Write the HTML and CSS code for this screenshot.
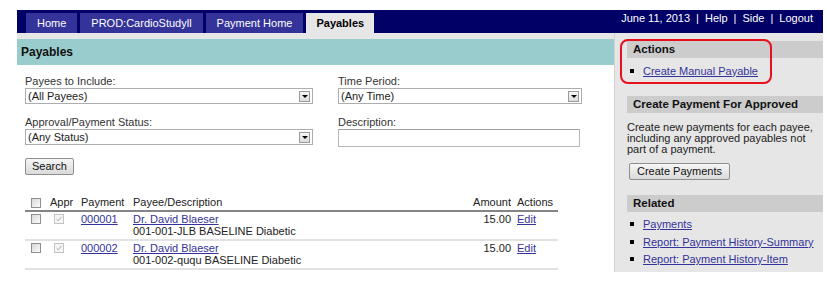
FILE: index.html
```html
<!DOCTYPE html>
<html>
<head>
<meta charset="utf-8">
<title>Payables</title>
<link rel="stylesheet" href="styles.css">
</head>
<body>
<div class="page">
  <header class="topbar">
    <nav class="tabs">
      <a class="tab" href="#">Home</a>
      <a class="tab" href="#">PROD:CardioStudyll</a>
      <a class="tab" href="#">Payment Home</a>
      <a class="tab active" href="#">Payables</a>
    </nav>
    <div class="util">June 11, 2013<span class="sep">|</span><a href="#">Help</a><span class="sep">|</span><a href="#">Side</a><span class="sep">|</span><a href="#">Logout</a></div>
  </header>
  <div class="layout">
    <main class="main">
      <h1 class="title">Payables</h1>
      <div class="content">
        <div class="filters">
          <div class="field">
            <label>Payees to Include:</label>
            <div class="select wide"><span class="value">(All Payees)</span><span class="arrow"></span></div>
          </div>
          <div class="field">
            <label>Time Period:</label>
            <div class="select narrow"><span class="value">(Any Time)</span><span class="arrow"></span></div>
          </div>
          <div class="field">
            <label>Approval/Payment Status:</label>
            <div class="select wide"><span class="value">(Any Status)</span><span class="arrow"></span></div>
          </div>
          <div class="field">
            <label>Description:</label>
            <div class="text-input"></div>
          </div>
        </div>
        <button class="btn search">Search</button>
        <table class="grid">
          <colgroup>
            <col class="c-sel"><col class="c-appr"><col class="c-pay"><col class="c-payee"><col class="c-amt"><col class="c-act">
          </colgroup>
          <thead>
            <tr>
              <th class="center"><span class="cb"></span></th>
              <th>Appr</th>
              <th>Payment</th>
              <th>Payee/Description</th>
              <th class="right">Amount</th>
              <th>Actions</th>
            </tr>
          </thead>
          <tbody>
            <tr>
              <td class="center"><span class="cb"></span></td>
              <td><span class="cb checked"><svg viewBox="0 0 8 8" width="8" height="8"><path d="M1.5 4.2 L3.2 5.8 L6.6 1.8" fill="none" stroke="#a8a8a8" stroke-width="1"/></svg></span></td>
              <td><a href="#">000001</a></td>
              <td><a href="#">Dr. David Blaeser</a><br>001-001-JLB BASELINE Diabetic</td>
              <td class="right">15.00</td>
              <td><a href="#">Edit</a></td>
            </tr>
            <tr>
              <td class="center"><span class="cb"></span></td>
              <td><span class="cb checked"><svg viewBox="0 0 8 8" width="8" height="8"><path d="M1.5 4.2 L3.2 5.8 L6.6 1.8" fill="none" stroke="#a8a8a8" stroke-width="1"/></svg></span></td>
              <td><a href="#">000002</a></td>
              <td><a href="#">Dr. David Blaeser</a><br>001-002-ququ BASELINE Diabetic</td>
              <td class="right">15.00</td>
              <td><a href="#">Edit</a></td>
            </tr>
          </tbody>
        </table>
      </div>
    </main>
    <aside class="side">
      <section class="sbox">
        <h2>Actions</h2>
        <ul class="links">
          <li><a href="#">Create Manual Payable</a></li>
        </ul>
        <div class="highlight"></div>
      </section>
      <section class="sbox gap1">
        <h2>Create Payment For Approved</h2>
        <p class="desc">Create new payments for each payee, including any approved payables not part of a payment.</p>
        <button class="btn create">Create Payments</button>
      </section>
      <section class="sbox gap2">
        <h2>Related</h2>
        <ul class="links rel">
          <li><a href="#">Payments</a></li>
          <li><a href="#">Report: Payment History-Summary</a></li>
          <li><a href="#">Report: Payment History-Item</a></li>
        </ul>
      </section>
    </aside>
  </div>
</div>
</body>
</html>
```

FILE: styles.css
```css
* { box-sizing: border-box; }

body {
  margin: 0;
  background: #fff;
  font-family: "Liberation Sans", Arial, sans-serif;
  font-size: 11px;
  color: #222;
}

a { color: #333399; }

.page {
  width: 806px;
  margin: 10px 0 0 17px;
}

/* top bar */
.topbar {
  display: flex;
  justify-content: space-between;
  height: 23px;
  background: #000066;
  padding: 0 10px 0 9px;
}
.tabs {
  display: flex;
  gap: 3px;
  align-self: flex-end;
}
.tab {
  display: block;
  height: 20px;
  line-height: 20px;
  padding: 0 11px;
  background: #333399;
  color: #fff;
  text-decoration: none;
}
.tab.active {
  background: #e6e6e6;
  color: #000;
  font-weight: bold;
  padding: 0 10px;
}
.util {
  color: #fff;
  padding-top: 2px;
  line-height: 13px;
}
.util a { color: #fff; text-decoration: none; }
.sep { margin: 0 6px; }

/* layout */
.layout {
  display: flex;
  background: #e6e6e6;
}
.main {
  width: 597px;
  margin-top: 6px;
  background: #fff;
  padding-bottom: 2px;
}
.title {
  margin: 0;
  height: 26px;
  line-height: 26px;
  padding-left: 4px;
  background: #99cccc;
  font-size: 12px;
  font-weight: bold;
  color: #111;
}
.content { padding: 10px 0 0 8px; }

/* filters */
.filters {
  display: grid;
  grid-template-columns: 288px 244px;
  column-gap: 25px;
  row-gap: 12px;
}
.field label {
  display: block;
  line-height: 13px;
  color: #333;
}
.select {
  display: flex;
  align-items: center;
  height: 16px;
  border: 1px solid #abadb3;
  background: #fff;
  padding: 0 2px 0 2px;
}
.select .value { flex: 1; line-height: 14px; color: #222; }
.select .arrow {
  width: 11px;
  height: 11px;
  border: 1px solid #9a9a9a;
  background: linear-gradient(#f7f7f7, #dcdcdc);
  display: flex;
  align-items: center;
  justify-content: center;
}
.select .arrow::before {
  content: "";
  border-left: 3px solid transparent;
  border-right: 3px solid transparent;
  border-top: 3px solid #000;
}
.text-input {
  width: 242px;
  height: 18px;
  border: 1px solid #b8b8b8;
  border-top-color: #a0a0a0;
  background: #fff;
}

.btn {
  font-family: inherit;
  font-size: 11px;
  height: 17px;
  line-height: 15px;
  padding: 0 6px;
  border: 1px solid #8e8e8e;
  border-radius: 2px;
  background: linear-gradient(#f6f6f6, #dadada);
  color: #111;
}
.search { display: block; margin-top: 11px; }

/* table */
.grid {
  margin-top: 20px;
  width: 533px;
  border-collapse: collapse;
  table-layout: fixed;
}
.c-sel { width: 22px; }
.c-appr { width: 31px; }
.c-pay { width: 52px; }
.c-payee { width: 339px; }
.c-amt { width: 45px; }
.c-act { width: 44px; }
.grid th {
  font-weight: normal;
  text-align: left;
  line-height: 13px;
  padding: 1px 3px;
  border-bottom: 2px solid #858585;
  color: #222;
}
.grid td {
  vertical-align: top;
  line-height: 12px;
  padding: 1px 3px 2px;
  border-bottom: 2px solid #e2e2e2;
}
.grid .center { text-align: center; }
.grid .right { text-align: right; }
.cb {
  display: inline-block;
  width: 10px;
  height: 10px;
  border: 1px solid #8f8f8f;
  background: linear-gradient(135deg, #d8d8d8, #fbfbfb);
  vertical-align: middle;
}
.grid td .cb { margin-top: 1px; vertical-align: top; }
.cb.checked {
  margin-left: 4px;
  border-color: #c4c4c4;
  background: #f6f6f6;
  display: inline-flex;
  align-items: center;
  justify-content: center;
}

/* sidebar */
.side {
  flex: 1;
  border-left: 1px solid #d2d2d2;
  padding: 8px 0 4px 12px;
}
.sbox { position: relative; }
.sbox h2 {
  margin: 0;
  height: 17px;
  line-height: 17px;
  background: #cccccc;
  font-size: 11.5px;
  font-weight: bold;
  padding-left: 6px;
  color: #111;
}
.links {
  list-style: none;
  margin: 0;
  padding: 4px 0 0 3px;
}
.links.rel { padding-top: 4px; }
.links li {
  display: flex;
  align-items: center;
  height: 17px;
}
.links.rel li { height: 17.5px; }
.links li::before {
  content: "";
  width: 4px;
  height: 4px;
  background: #000;
  margin-right: 9px;
}
.gap1 { margin-top: 17px; }
.gap2 { margin-top: 15px; }
.desc {
  margin: 9px 0 0;
  line-height: 11.2px;
  color: #222;
}
.create { display: block; margin: 7px 0 0 2px; padding: 0 7px; }

.highlight {
  position: absolute;
  left: -7px;
  top: -2px;
  width: 152px;
  height: 45px;
  border: 2px solid #e8101a;
  border-radius: 8px;
}
```
